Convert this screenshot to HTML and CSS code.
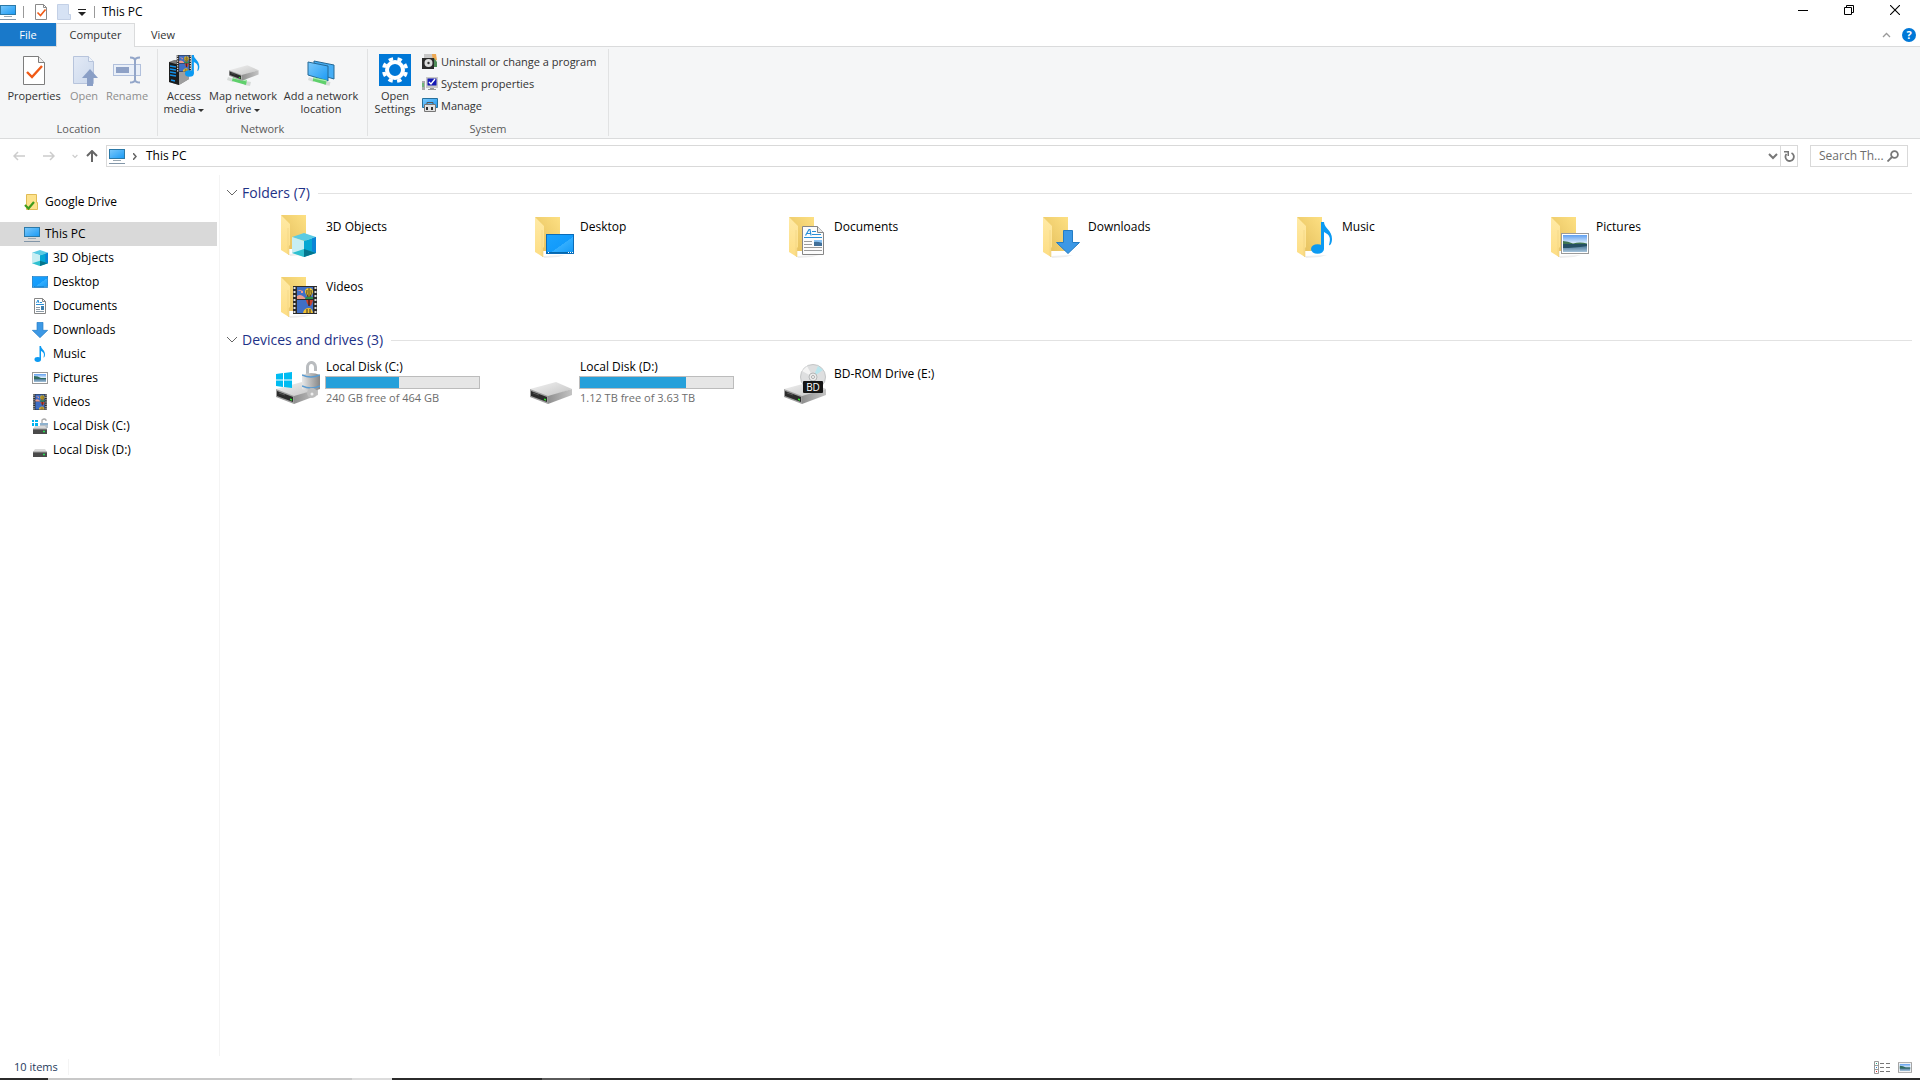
FILE: index.html
```html
<!DOCTYPE html>
<html lang="en">
<head>
<meta charset="utf-8">
<title>This PC</title>
<link rel="stylesheet" href="styles.css">
</head>
<body>
<svg class="defs" width="0" height="0" aria-hidden="true">
  <defs>
    <linearGradient id="g-screen" x1="0" y1="0" x2="1" y2="1"><stop offset="0" stop-color="#7cc9fb"/><stop offset="1" stop-color="#1a9af5"/></linearGradient>
    <linearGradient id="g-desk" x1="0" y1="0" x2="1" y2="1"><stop offset="0" stop-color="#1ba3ff"/><stop offset=".55" stop-color="#129bfb"/><stop offset=".56" stop-color="#33aefe"/><stop offset="1" stop-color="#1298f5"/></linearGradient>
    <linearGradient id="g-back" x1="1" y1="0" x2="0" y2="1"><stop offset="0" stop-color="#fde083"/><stop offset="1" stop-color="#e3bd5a"/></linearGradient>
    <linearGradient id="g-flap" x1="0" y1="0" x2="0" y2="1"><stop offset="0" stop-color="#ffeaa6"/><stop offset="1" stop-color="#fddd83"/></linearGradient>
    <linearGradient id="g-top" x1="0" y1="0" x2="1" y2="1"><stop offset="0" stop-color="#f2f2f2"/><stop offset="1" stop-color="#c2c2c2"/></linearGradient>
    <linearGradient id="g-side" x1="0" y1="0" x2="1" y2="0"><stop offset="0" stop-color="#8f8f8f"/><stop offset="1" stop-color="#c4c4c4"/></linearGradient>
    <linearGradient id="g-sky" x1="0" y1="0" x2="0" y2="1"><stop offset="0" stop-color="#5f9ff0"/><stop offset="1" stop-color="#e8f4fc"/></linearGradient>
    <linearGradient id="g-water" x1="0" y1="0" x2="0" y2="1"><stop offset="0" stop-color="#305f80"/><stop offset="1" stop-color="#a5c4dc"/></linearGradient>
    <linearGradient id="g-lock" x1="0" y1="0" x2="1" y2="0"><stop offset="0" stop-color="#e8e8e8"/><stop offset="1" stop-color="#868686"/></linearGradient>
    <linearGradient id="g-open" x1="0" y1="0" x2="1" y2="1"><stop offset="0" stop-color="#e3eaf6"/><stop offset="1" stop-color="#cbd8ec"/></linearGradient>

    <symbol id="pc" viewBox="0 0 16 16"><rect x=".5" y="1.5" width="15" height="9" fill="url(#g-screen)" stroke="#2b79a8"/><path d="M4 12.5h8" stroke="#9aa8b2"/><path d="M0 15.500h16" stroke="#8296a8"/></symbol>
    <symbol id="cube" viewBox="0 0 24 24"><path d="M12 0 24 4 12 8 0 4z" fill="#5bcbe3"/><path d="M0 4 12 8v16L0 20z" fill="#c7eef3"/><path d="M12 8 24 4v16l-12 4z" fill="#05a7d3"/><path d="M20 5.500 24 4v16l-4-2z" fill="#0b84d6"/><path d="M0 20l12-4v8z" fill="#2fc0d0"/><path d="M12 16l12 4-12 4z" fill="#04758d"/></symbol>
    <symbol id="desk" viewBox="0 0 28 20"><rect x=".5" y=".5" width="27" height="19" fill="url(#g-desk)" stroke="#0b6cb8"/><path d="M1 18.500h26" stroke="#0568ac"/><path d="M2 18.500h1m19 0h1m1 0h1m1 0h1" stroke="#fff"/></symbol>
    <symbol id="doc" viewBox="0 0 22 29"><path d="M.5.5h15l6 6v22H.5z" fill="#fcfcfc" stroke="#868686"/><path d="M15.500.5v6h6" fill="#e8e8e8" stroke="#868686"/><path d="M3.500 9.500 7 3.500h1l1 6M5 7.500h4M10 5.500h4m-4 3h9M2 11.500h18" stroke="#2a8fd6" fill="none" stroke-width="1.200"/><path d="M2 15.500h8M2 18.500h8M2 21.500h18M2 24.500h18" stroke="#9b9b9b"/><rect x="12" y="14" width="8" height="6" fill="#416f98"/><path d="M12 16q3-1 8 1v-3h-8z" fill="#8cc4f4"/></symbol>
    <symbol id="down" viewBox="0 0 24 24"><path d="M7.500.5h9v12h7L12 23.500.5 12.500h7z" fill="#3c98e5" stroke="#247cc4"/></symbol>
    <symbol id="note" viewBox="0 0 22 32"><ellipse cx="6.500" cy="27" rx="6.500" ry="4.800" fill="#0c9af2"/><path d="M10 0h3c0 6 8 8 8 17 0 4-2 7-3 6 2-7 1-10-5-13v17h-3z" fill="#0c9af2"/></symbol>
    <symbol id="photo" viewBox="0 0 28 21"><rect x=".5" y=".5" width="27" height="20" fill="#fff" stroke="#9a9a9a"/><rect x="2" y="2" width="24" height="9" fill="url(#g-sky)"/><rect x="2" y="11" width="24" height="8" fill="url(#g-water)"/><path d="M2 8q5 0 10 2.500 7-2 14 0v2H2z" fill="#3f7551"/><path d="M2 11h24v2q-14 2-24 2z" fill="#244f63"/></symbol>
    <symbol id="photo-small" viewBox="0 0 16 12"><rect x=".5" y=".5" width="15" height="11" fill="#fff" stroke="#999"/><rect x="2" y="2" width="12" height="4" fill="url(#g-sky)"/><rect x="2" y="6" width="12" height="4" fill="url(#g-water)"/><path d="M2 4q4 0 7 2h5v1H2z" fill="#2f6b5f"/></symbol>
    <symbol id="doc-small" viewBox="0 0 16 16"><path d="M2.500.5h8l3 3v12h-11z" fill="#fff" stroke="#868686"/><path d="M10.500.5v3h3" fill="none" stroke="#868686"/><path d="M4.500 5l1.500-3 1 3M8 4.500h2M4 6.500h8" fill="none" stroke="#2a8fd6"/><path d="M4 9.500h4M4 11.500h4M4 13.500h8" stroke="#8b9aa6"/><path d="M9 8h3v4H9z" fill="#3d7fae"/></symbol>
    <symbol id="film" viewBox="0 0 24 28"><path d="M0 0h24v28H0z" fill="#2b2b2b"/><path d="M1.500 1v27M22.500 1v27" stroke="#e1e1e1" stroke-width="2" stroke-dasharray="2 2"/><path d="M4 1h16v12H4zM4 14h16v13H4z" fill="#3f6fc6"/><path d="M4 5h4v2h2v-2l-3-1zM4 10q4-3 9 3H4z" fill="#eb9b8c"/><path d="M13 11h7v2h-8z" fill="#2f8c4d"/><path d="M12 6a3.800 3.800 0 0 1 8 0q-1 4-3 5h-2q-2-1-3-5z" fill="#f1c62f"/><path d="M14 4q-1 4 1 7m3-7q1 4-1 7M16 2v9" stroke="#1d1d1d" stroke-width=".8" fill="none"/><path d="M13 14h7q-1 5-3 6-3-1-4-6z" fill="#c7422e"/><path d="M16 14v6" stroke="#111"/><path d="M10 27q1-5 6-5 3 0 4 5z" fill="#f0bf30"/><path d="M14 23v4m3-4v4" stroke="#333"/></symbol>
    <symbol id="folder" viewBox="0 0 30 42"><path d="M8 39l22-1-7 2-14 1z" fill="#eee"/><path d="M0 0h25v34H8z" fill="url(#g-back)"/><path d="M0 0l9 9v21l-1 1v9L0 35z" fill="url(#g-flap)"/><path d="M8 31v9l-1-1V13" fill="none" stroke="#efd080" stroke-width=".6"/></symbol>
    <symbol id="drive" viewBox="0 0 44 22"><path d="M0 7 26 0l16 7-24 8z" fill="url(#g-top)"/><path d="M18 14 42 7v6l-24 9z" fill="url(#g-side)"/><path d="M0 7 18 14v8L0 15z" fill="#9f9f9f"/><path d="M1 9l16 6v5L1 14z" fill="#2b2b2b"/><path d="M3 11l6 2" stroke="#555"/><path d="M14 16.500l2 .6v1.600l-2-.6z" fill="#2ee62e"/></symbol>
    <symbol id="win" viewBox="0 0 16 16"><path d="M0 2 7 1v6.500H0zM8 .9 16 0v7.500H8zM0 8.500h7V15l-7-1zM8 8.500h8V16l-8-1z" fill="#00bcf2"/></symbol>
    <symbol id="lock" viewBox="0 0 18 38"><path d="M5.500 14V7a4 5 0 0 1 8-1v4" fill="none" stroke="#b9bcbf" stroke-width="3"/><path d="M0 14q9-4 18 0v14q-9 4-18 0z" fill="url(#g-lock)"/><path d="M0 14q9 4 18 0M0 25q9 4 18 0" fill="none" stroke="#5b9bd0" stroke-width="1.500"/><circle cx="10" cy="32" r="5" fill="#bdbdbd"/><circle cx="10" cy="33" r="1.500" fill="#efefef"/></symbol>
    <symbol id="sdrive" viewBox="0 0 16 8"><path d="M3 0h10l2 3H1z" fill="#d9d9d9"/><path d="M1 3h14v5H1z" fill="#4a4a4a"/><path d="M1 3h14" stroke="#999"/><path d="M11 5.500h2" stroke="#27dd53" stroke-width="1.500"/></symbol>
    <symbol id="check" viewBox="0 0 22 29"><path d="M.5.5h15l6 6v22H.5z" fill="#fff" stroke="#7d7d7d"/><path d="M15.500.5v6h6" fill="#eee" stroke="#7d7d7d"/><path d="M4 16l5 5 10-11" fill="none" stroke="#f05a16" stroke-width="2.400"/></symbol>
    <symbol id="chev" viewBox="0 0 12 8"><path d="M1 1l5 5 5-5" fill="none" stroke="currentColor"/></symbol>
    <symbol id="chevbold" viewBox="0 0 10 7"><path d="M1 1l4 4 4-4" fill="none" stroke="currentColor" stroke-width="2"/></symbol>
    <symbol id="arrow" viewBox="0 0 12 10"><path d="M0 5h11M7 1l4 4-4 4" fill="none" stroke="currentColor" stroke-width="1.500"/></symbol>
    <symbol id="netcable" viewBox="0 0 32 12"><path d="M1 3l6 2-1 3-6-2zM18 7l6 1-1 4-6-1z" fill="#d7dbd9"/><path d="M6 3l14 3-1 5L5 7z" fill="#5fd06c"/><path d="M6 4l14 3" stroke="#b8f0bd"/></symbol>
  </defs>
</svg>

<header class="titlebar">
  <svg class="i16"><use href="#pc"/></svg>
  <span class="bar bar-first"></span>
  <button class="quick quick-check" aria-label="Properties"><svg width="12" height="16" viewBox="0 0 12 16"><path d="M.5.5h8l3 3v12H.5z" fill="#fff" stroke="#8a8a8a"/><path d="M8.500.5v3h3" fill="none" stroke="#8a8a8a"/><path d="M2.500 8.500l3 3 5-6" fill="none" stroke="#f05a16" stroke-width="1.600"/></svg></button>
  <button class="quick quick-new" aria-label="New folder"><svg width="14" height="16" viewBox="0 0 14 16"><path d="M.5.5h11v10h2v5H.5z" fill="#d6e2f4" stroke="#c3d0e6"/></svg></button>
  <button class="quick quick-more" aria-label="Customize toolbar"><svg width="8" height="7" viewBox="0 0 8 7"><path d="M0 .5h8" stroke="#222"/><path d="M0 3h8L4 7z" fill="#222"/></svg></button>
  <span class="bar bar-last"></span>
  <h1 class="title">This PC</h1>
  <div class="controls">
    <button aria-label="Minimize"><svg width="10" height="10" viewBox="0 0 10 10"><path d="M0 5.500h10" stroke="#000"/></svg></button>
    <button aria-label="Restore"><svg width="10" height="10" viewBox="0 0 10 10"><path d="M.5 2.500h7v7h-7zM2.500 2.500v-2h7v7h-2" fill="none" stroke="#000"/></svg></button>
    <button aria-label="Close"><svg width="10" height="10" viewBox="0 0 10 10"><path d="M0 0l10 10M10 0L0 10" stroke="#000" stroke-width="1.100"/></svg></button>
  </div>
</header>

<nav class="tabs">
  <button class="tab tab-file">File</button>
  <button class="tab tab-on">Computer</button>
  <button class="tab">View</button>
  <div class="tab-tools">
    <button class="collapse" aria-label="Collapse ribbon"><svg width="9" height="6" viewBox="0 0 9 6"><path d="M1 5l3.500-3.500L8 5" fill="none" stroke="#9a9a9a" stroke-width="1.300"/></svg></button>
    <button class="help" aria-label="Help">?</button>
  </div>
</nav>

<section class="ribbon">
  <div class="group">
    <div class="tools tools-location">
      <button class="tool w60"><span class="pic"><svg width="22" height="29"><use href="#check"/></svg></span>Properties</button>
      <button class="tool w40" disabled><span class="pic"><svg width="28" height="32" viewBox="0 0 28 32"><path d="M3.500 2.500h15l5 5v22h-20z" fill="url(#g-open)" stroke="#b7c4dc"/><path d="M18.500 2.500v5h5" fill="#eef3fa" stroke="#b7c4dc"/><path d="M20 15l8 9h-5v8h-6v-8h-5z" fill="#8a9fc6"/></svg></span>Open</button>
      <button class="tool w46" disabled><span class="pic"><svg width="30" height="30" viewBox="0 0 30 30"><rect x="1.500" y="9.500" width="27" height="11" fill="#e9eff8" stroke="#b1c0dc"/><rect x="4" y="12" width="13" height="6" fill="#8ea1c6"/><path d="M18 2.500q5 0 5 3 0-3 5-3M23 4v22M18 27.500q5 0 5-3 0 3 5 3" fill="none" stroke="#93a6c9" stroke-width="2"/></svg></span>Rename</button>
    </div>
    <span class="group-name">Location</span>
  </div>
  <div class="group">
    <div class="tools tools-network">
      <button class="tool w40"><span class="pic"><svg width="32" height="32" viewBox="0 0 32 32"><path d="M1 8l5-2h15v19l-10 6-10-3z" fill="#7b7b7b"/><path d="M1 8l10 3v20L1 28z" fill="#1c1c1c"/><path d="M2 12l6 1m-6 2l6 1m-6 2l6 1m-6 2l6 1m-5 4l4 1" stroke="#1390e8" stroke-width="1.300"/><path d="M11 15l10-3v13l-10 6z" fill="#9e9e9e"/><svg x="8" y="1" width="16" height="17"><use href="#film"/></svg><svg x="17" y="1" width="15" height="22"><use href="#note"/></svg></svg></span>Access<span>media <i class="caret"></i></span></button>
      <button class="tool w78"><span class="pic"><svg width="32" height="32" viewBox="0 0 32 32"><svg x="0" y="20" width="32" height="12"><use href="#netcable"/></svg><svg x="2" y="11" width="31" height="16"><use href="#drive"/></svg></svg></span>Map network<span>drive <i class="caret"></i></span></button>
      <button class="tool w78"><span class="pic"><svg width="32" height="32" viewBox="0 0 32 32"><path d="M9 7l20 4v14L9 19z" fill="#47aef5" stroke="#256995"/><path d="M3 8l20 4v15L3 21z" fill="url(#g-screen)" stroke="#256995"/><svg x="3" y="20" width="30" height="12"><use href="#netcable"/></svg></svg></span>Add a network<span>location</span></button>
    </div>
    <span class="group-name">Network</span>
  </div>
  <div class="group group-system">
    <div class="tools tools-system">
      <button class="tool w52"><span class="pic"><svg width="32" height="32" viewBox="0 0 32 32"><path d="M0 0h32v32H0z" fill="#0078d7"/><circle cx="16" cy="16" r="8" fill="none" stroke="#fff" stroke-width="4"/><circle cx="16" cy="16" r="11.300" fill="none" stroke="#fff" stroke-width="3.500" stroke-dasharray="4.400 4.475" stroke-dashoffset="-2.200"/></svg></span>Open<span>Settings</span></button>
      <div class="small-tools">
        <button class="small"><svg width="16" height="16" viewBox="0 0 16 16"><path d="M2 1h9v4H2z" fill="#c8c8c8"/><path d="M10 1h4l1 6-4 2z" fill="#eea953"/><path d="M12 5l3 4v5h-3z" fill="#4f8d58"/><path d="M0 5h12v11H0z" fill="#2b2b2b"/><circle cx="6.500" cy="10" r="4" fill="#ddd"/><circle cx="6.500" cy="10" r="1.200" fill="#333"/></svg>Uninstall or change a program</button>
        <button class="small"><svg width="16" height="16" viewBox="0 0 16 16"><path d="M0 6h3v9H0z" fill="#aaa"/><path d="M1 8v4" stroke="#36c546"/><path d="M4 2h12v11H4z" fill="#c7c7c7"/><path d="M5.500 3.500h9v7h-9z" fill="#1418b4"/><path d="M7 7l2 2 4-5" fill="none" stroke="#fff" stroke-width="1.400"/><path d="M8 13h4v1h2v1H6v-1h2z" fill="#999"/></svg>System properties</button>
        <button class="small"><svg width="16" height="16" viewBox="0 0 16 16"><path d="M.5 1.500h15v9H.5z" fill="url(#g-screen)" stroke="#26709c"/><path d="M5 8V5.500h6V8" fill="none" stroke="#555"/><path d="M2.500 7.500h11v7h-11z" fill="#e2e2e2" stroke="#777"/><path d="M4 10h2v3H4zM9 10h2v3H9z" fill="#333"/></svg>Manage</button>
      </div>
    </div>
    <span class="group-name">System</span>
  </div>
</section>

<section class="address-row">
  <button class="go go-back" aria-label="Back" disabled><svg width="12" height="10" viewBox="0 0 12 10"><path d="M12 5H1M5 1L1 5l4 4" fill="none" stroke="currentColor" stroke-width="1.500"/></svg></button>
  <button class="go" aria-label="Forward" disabled><svg width="12" height="10"><use href="#arrow"/></svg></button>
  <button class="go go-recent" aria-label="Recent locations" disabled><svg width="6" height="5"><use href="#chevbold"/></svg></button>
  <button class="go go-up" aria-label="Up"><svg width="12" height="12" viewBox="0 0 12 12"><path d="M6 12V2M1 6l5-5 5 5" fill="none" stroke="currentColor" stroke-width="2"/></svg></button>
  <div class="address">
    <svg class="i16"><use href="#pc"/></svg>
    <svg class="crumb" width="4" height="7" viewBox="0 0 4 7"><path d="M0 0l3 3.500L0 7" fill="none" stroke="#666" stroke-width="1.500"/></svg>
    <a href="#this-pc">This PC</a>
    <button class="address-drop" aria-label="Previous locations"><svg width="10" height="7"><use href="#chevbold"/></svg></button>
    <button class="refresh" aria-label="Refresh"><svg width="11" height="12" viewBox="0 0 11 12"><path d="M7.500 3A4.200 4.200 0 1 1 2.500 4" fill="none" stroke="currentColor" stroke-width="1.800"/><path d="M0 1h5v5H3.500V2.500H0z" fill="currentColor"/></svg></button>
  </div>
  <form class="search">
    <input type="text" aria-label="Search This PC" placeholder="Search Th...">
    <button type="button" aria-label="Search"><svg width="12" height="12" viewBox="0 0 12 12"><circle cx="7.500" cy="4.500" r="3.400" fill="none" stroke="currentColor" stroke-width="1.800"/><path d="M5 7l-4.500 4.500" stroke="currentColor" stroke-width="1.800"/></svg></button>
  </form>
</section>

<div class="body">
  <nav class="side">
    <a class="place" href="#gdrive"><svg class="i16" viewBox="0 0 16 16"><path d="M2.500.5h10v8h1v7h-11z" fill="#fde28c" stroke="#e0bb55"/><path d="M1 11l3.500 3.500L10 8" fill="none" stroke="#3e9c1d" stroke-width="2.200"/></svg>Google Drive</a>
    <a class="place on" id="this-pc" href="#this-pc"><svg class="i16"><use href="#pc"/></svg>This PC</a>
    <a class="place sub" href="#objects"><svg class="i16"><use href="#cube"/></svg>3D Objects</a>
    <a class="place sub" href="#desktop"><svg class="i16"><use href="#desk"/></svg>Desktop</a>
    <a class="place sub" href="#documents"><svg class="i16"><use href="#doc-small"/></svg>Documents</a>
    <a class="place sub" href="#downloads"><svg class="i16"><use href="#down"/></svg>Downloads</a>
    <a class="place sub" href="#music"><svg class="i16"><use href="#note"/></svg>Music</a>
    <a class="place sub" href="#pictures"><svg class="i16"><use href="#photo-small"/></svg>Pictures</a>
    <a class="place sub" href="#videos"><svg class="i16"><use href="#film"/></svg>Videos</a>
    <a class="place sub" href="#disk-c"><svg class="i16" viewBox="0 0 16 16"><path d="M0 2h2v2H0zM3 2h3v2H3zM0 5h2v3H0zM3 5h3v3H3z" fill="#00b4f0"/><path d="M10 5V2q2.500-2 4 0v1" fill="none" stroke="#aaa" stroke-width="1.300"/><path d="M8 5h8v5H8z" fill="#b4bfc8"/><path d="M8 6h8" stroke="#6aa3d2"/><svg y="8" width="16" height="8"><use href="#sdrive"/></svg></svg>Local Disk (C:)</a>
    <a class="place sub" href="#disk-d"><svg class="i16" viewBox="0 0 16 16"><svg y="7" width="16" height="8"><use href="#sdrive"/></svg></svg>Local Disk (D:)</a>
  </nav>

  <main class="content">
    <h2 class="section"><svg width="12" height="8"><use href="#chev"/></svg>Folders (7)</h2>
    <div class="tiles">
      <a class="tile" id="objects" href="#objects"><svg class="i48" viewBox="0 0 48 48"><svg x="7" y="4" width="30" height="42"><use href="#folder"/></svg><svg x="18" y="22" width="24" height="24"><use href="#cube"/></svg></svg><span>3D Objects</span></a>
      <a class="tile" id="desktop" href="#desktop"><svg class="i48" viewBox="0 0 48 48"><svg x="7" y="6" width="30" height="42"><use href="#folder"/></svg><svg x="18" y="23" width="28" height="20"><use href="#desk"/></svg></svg><span>Desktop</span></a>
      <a class="tile" id="documents" href="#documents"><svg class="i48" viewBox="0 0 48 48"><svg x="7" y="6" width="30" height="42"><use href="#folder"/></svg><svg x="20" y="15" width="22" height="29"><use href="#doc"/></svg></svg><span>Documents</span></a>
      <a class="tile" id="downloads" href="#downloads"><svg class="i48" viewBox="0 0 48 48"><svg x="7" y="6" width="30" height="42"><use href="#folder"/></svg><svg x="20" y="19" width="24" height="24"><use href="#down"/></svg></svg><span>Downloads</span></a>
      <a class="tile" id="music" href="#music"><svg class="i48" viewBox="0 0 48 48"><svg x="7" y="6" width="30" height="42"><use href="#folder"/></svg><svg x="21" y="11" width="22" height="32"><use href="#note"/></svg></svg><span>Music</span></a>
      <a class="tile" id="pictures" href="#pictures"><svg class="i48" viewBox="0 0 48 48"><svg x="7" y="6" width="30" height="42"><use href="#folder"/></svg><svg x="17" y="22" width="28" height="21"><use href="#photo"/></svg></svg><span>Pictures</span></a>
      <a class="tile" id="videos" href="#videos"><svg class="i48" viewBox="0 0 48 48"><svg x="7" y="6" width="30" height="42"><use href="#folder"/></svg><svg x="19" y="15" width="24" height="28"><use href="#film"/></svg></svg><span>Videos</span></a>
    </div>
    <h2 class="section"><svg width="12" height="8"><use href="#chev"/></svg>Devices and drives (3)</h2>
    <div class="tiles">
      <a class="tile disk" id="disk-c" href="#disk-c"><svg class="i48" viewBox="0 0 48 48"><svg x="2" y="24" width="44" height="22"><use href="#drive"/></svg><svg x="2" y="14" width="16" height="16"><use href="#win"/></svg><svg x="28" y="3" width="18" height="38"><use href="#lock"/></svg></svg>
        <span class="disk-info"><span>Local Disk (C:)</span><progress max="100" value="48" aria-label="Used space on C"></progress><span class="free">240 GB free of 464 GB</span></span></a>
      <a class="tile disk" id="disk-d" href="#disk-d"><svg class="i48" viewBox="0 0 48 48"><svg x="2" y="24" width="44" height="22"><use href="#drive"/></svg></svg>
        <span class="disk-info"><span>Local Disk (D:)</span><progress max="100" value="69" aria-label="Used space on D"></progress><span class="free">1.12 TB free of 3.63 TB</span></span></a>
      <a class="tile" href="#disk-e"><svg class="i48" viewBox="0 0 48 48"><svg x="2" y="24" width="44" height="22"><use href="#drive"/></svg><circle cx="31" cy="19" r="12.500" fill="#dedfe0" stroke="#c4c6c7"/><path d="M31 19l5-11 5 4z" fill="#b9e6ee"/><path d="M31 19L20 13l5-5z" fill="#f4f4f4"/><circle cx="31" cy="19" r="4" fill="#ececec" stroke="#b5b7b8"/><circle cx="31" cy="19" r="1.500" fill="#fff" stroke="#aaa"/><rect x="21" y="23" width="20" height="12" rx="1" fill="#151515"/><text class="bd" x="31" y="33" text-anchor="middle">BD</text></svg><span>BD-ROM Drive (E:)</span></a>
    </div>
  </main>
</div>

<footer class="status">
  <span class="count">10 items</span>
  <button aria-label="Details view"><svg width="16" height="13" viewBox="0 0 16 13"><path d="M.5.5h4v12h-4zM.5 4.500h4M.5 8.500h4" fill="#fff" stroke="#999"/><path d="M6 2.500h4m2 0h4M6 6.500h4m2 0h4M6 10.500h4m2 0h4" stroke="#777"/><path d="M2 2.500h1" stroke="#2a8"/><path d="M2 6.500h1" stroke="#28d"/><path d="M2 10.500h1" stroke="#d22"/></svg></button>
  <button aria-label="Large icons view"><svg width="14" height="11"><use href="#photo-small"/></svg></button>
</footer>
<div class="taskbar"><span class="seg-dark"></span><span class="seg-search"></span><span class="seg-mic"></span><span class="seg-apps"></span><span class="seg-active"></span></div>
</body>
</html>
```
FILE: styles.css
```css
* { box-sizing: border-box; }

body {
  margin: 0;
  min-height: 100vh;
  display: flex;
  flex-direction: column;
  background: #fff;
  color: #000;
  font: 12px/16px "Open Sans", "Noto Sans", sans-serif;
}

button {
  margin: 0;
  padding: 0;
  border: 0;
  background: none;
  color: inherit;
  font: inherit;
}

a { color: inherit; text-decoration: none; }
svg { display: block; flex: none; }
.defs { position: absolute; }
.i16 { width: 16px; height: 16px; }
.i48 { width: 48px; height: 48px; }

/* Title bar */
.titlebar { display: flex; align-items: center; height: 23px; }
.bar { width: 1px; height: 12px; background: #999; }
.bar-first { margin-left: 7px; }
.bar-last { margin-left: 8px; }
.quick-check { margin-left: 11px; }
.quick-new { margin-left: 10px; }
.quick-more { margin: 2px 0 0 7px; }
.title { margin: 0 0 0 7px; font-size: 12px; font-weight: 400; }
.controls { display: flex; align-self: stretch; margin-left: auto; padding-right: 2px; }
.controls button { display: flex; align-items: center; justify-content: center; width: 46px; height: 20px; }

/* Ribbon tabs */
.tabs { display: flex; height: 24px; border-bottom: 1px solid #dadbdc; color: #333; font-size: 11px; }
.tab { width: 56px; height: 23px; }
.tab-file { background: #1979ca; color: #fff; }
.tab-on { width: 79px; height: 24px; padding-bottom: 2px; border: 1px solid #dadbdc; border-bottom: 0; background: #f5f6f7; }
.tab-tools { display: flex; align-items: center; gap: 11px; margin-left: auto; padding-right: 4px; }
.help { width: 14px; height: 14px; border-radius: 7px; background: #0078d7; color: #fff; font-size: 11px; line-height: 14px; font-weight: 700; }

/* Ribbon */
.ribbon { display: flex; height: 92px; padding: 2px 0; background: #f5f6f7; border-bottom: 1px solid #dadbdc; color: #333; font-size: 11px; line-height: 13px; }
.group { display: flex; flex-direction: column; justify-content: space-between; align-items: center; border-right: 1px solid #e1e2e3; }
.group-name { color: #5a5a5a; line-height: 14px; }
.tools { display: flex; align-items: flex-start; padding-top: 5px; }
.tools-location { padding-left: 4px; padding-right: 7px; }
.tools-network { padding-left: 6px; padding-right: 7px; }
.tools-system { padding-left: 1px; }
.group-system { width: 241px; align-items: stretch; text-align: center; }
.tool { display: flex; flex-direction: column; align-items: center; white-space: nowrap; }
.tool:disabled { color: #8d8d8d; }
.pic { display: flex; align-items: center; justify-content: center; height: 32px; margin-bottom: 3px; }
.w40 { width: 40px; }
.w46 { width: 46px; }
.w52 { width: 52px; }
.w60 { width: 60px; }
.w78 { width: 78px; }
.caret { display: inline-block; border: 3px solid transparent; border-top-color: #333; border-bottom: 0; vertical-align: middle; }
.small-tools { display: flex; flex-direction: column; padding-left: 1px; }
.small { display: flex; align-items: center; gap: 3px; height: 22px; padding-bottom: 8px; white-space: nowrap; }

/* Address bar */
.address-row { display: flex; align-items: center; height: 36px; padding: 0 12px 2px 13px; }
.go { display: flex; align-items: center; width: 30px; color: #666; }
.go:disabled { color: #ccc; }
.go-recent { width: 13px; padding-left: 0; }
.go-recent { margin-left: -1px; }
.go-up { width: 21px; padding-left: 1px; }
.address { display: flex; flex: 1; align-items: center; height: 22px; padding-left: 2px; border: 1px solid #d9d9d9; }
.crumb { margin: 0 9px 0 8px; }
.address-drop { margin-left: auto; padding-right: 2px; color: #777; }
.refresh { display: flex; align-items: center; justify-content: center; align-self: stretch; width: 17px; border-left: 1px solid #d9d9d9; color: #777; }
.search { display: flex; align-items: center; width: 98px; height: 22px; margin-left: 12px; padding: 0 8px; border: 1px solid #d9d9d9; color: #777; }
.search input { flex: 1; min-width: 0; padding: 0; border: 0; outline: 0; background: none; font: inherit; }
.search input::placeholder { color: #6d6d6d; opacity: 1; }

/* Navigation pane */
.body { display: flex; flex: 1; }
.side { display: flex; flex-direction: column; width: 220px; padding: 15px 2px 0 0; border-right: 1px solid #f4f4f4; }
.place { display: flex; align-items: center; gap: 5px; height: 24px; padding-left: 24px; }
.place.on { margin-top: 8px; background: #d9d9d9; }
.place.sub { padding-left: 32px; }

/* Item list */
.content { flex: 1; padding: 8px 8px 0 6px; }
.section { display: flex; align-items: center; gap: 4px; height: 20px; margin: 0; color: #1e3287; font-size: 14px; font-weight: 400; }
.section svg { color: #666; }
.section::after { content: ""; flex: 1; height: 1px; margin-left: 4px; background: #e2e2e2; }
.tiles { display: grid; grid-template-columns: repeat(auto-fill, 254px); grid-auto-rows: 60px; margin-bottom: 3px; padding: 4px 0 0 48px; }
.tile { display: flex; gap: 4px; padding-top: 4px; }
.tile > span { padding-top: 8px; }
.disk { gap: 3px; }
.tile > .disk-info { display: flex; flex-direction: column; padding-top: 1px; }
.disk-info > span { padding-left: 1px; }
progress { appearance: none; width: 155px; height: 13px; margin: 1px 0; border: 1px solid #bcbcbc; background: #e6e6e6; }
progress::-webkit-progress-bar { background: #e6e6e6; }
progress::-webkit-progress-value { background: #26a0da; }
.free { color: #6d6d6d; font-size: 11px; }
.bd { font-size: 10px; fill: #fff; }

/* Status bar */
.status { display: flex; align-items: center; gap: 8px; height: 22px; padding: 0 8px 0 14px; color: #1e395b; }
.count { margin-right: auto; padding-right: 10px; border-right: 1px solid #f4f4f4; font-size: 11px; }

.taskbar { display: flex; height: 2px; background: #2b2b2b; }
.seg-dark { width: 48px; }
.seg-search { width: 304px; background: #c8c8c8; }
.seg-mic { width: 40px; background: #dcdcdc; }
.seg-apps { width: 150px; }
.seg-active { width: 48px; background: #5a5a5a; }
```
